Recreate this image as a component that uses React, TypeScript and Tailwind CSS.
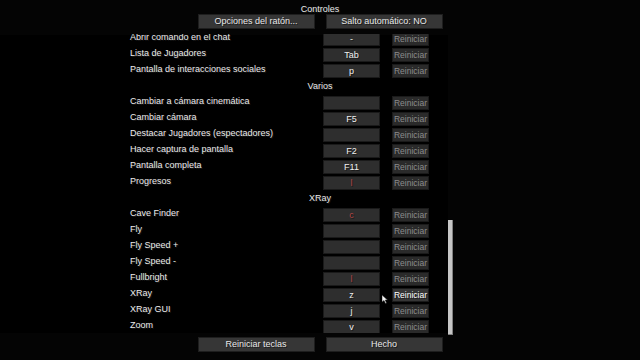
import React from "react";

type Row =
  | { kind: "cat"; label: string }
  | { kind: "key"; label: string; key: string; red?: boolean; hover?: boolean };

const rows: Row[] = [
  { kind: "key", label: "Abrir comando en el chat", key: "-" },
  { kind: "key", label: "Lista de Jugadores", key: "Tab" },
  { kind: "key", label: "Pantalla de interacciones sociales", key: "p" },
  { kind: "cat", label: "Varios" },
  { kind: "key", label: "Cambiar a cámara cinemática", key: "" },
  { kind: "key", label: "Cambiar cámara", key: "F5" },
  { kind: "key", label: "Destacar Jugadores (espectadores)", key: "" },
  { kind: "key", label: "Hacer captura de pantalla", key: "F2" },
  { kind: "key", label: "Pantalla completa", key: "F11" },
  { kind: "key", label: "Progresos", key: "l", red: true },
  { kind: "cat", label: "XRay" },
  { kind: "key", label: "Cave Finder", key: "c", red: true },
  { kind: "key", label: "Fly", key: "" },
  { kind: "key", label: "Fly Speed +", key: "" },
  { kind: "key", label: "Fly Speed -", key: "" },
  { kind: "key", label: "Fullbright", key: "l", red: true },
  { kind: "key", label: "XRay", key: "z", hover: true },
  { kind: "key", label: "XRay GUI", key: "j" },
  { kind: "key", label: "Zoom", key: "v" },
];

function BigButton({ label }: { label: string }) {
  return (
    <div className="w-[117px] h-[15px] bg-[#363636] border border-[#1e1e1e] flex items-center justify-center text-[#e8e8e8] text-[9px] leading-none [text-shadow:1px_1px_0_#1a1a1a]">
      {label}
    </div>
  );
}

export default function App() {
  return (
    <div
      className="w-[640px] h-[360px] bg-[#040404] flex flex-col overflow-hidden relative"
      style={{ fontFamily: '"Liberation Sans", Arial, sans-serif' }}
    >
      <div className="h-[14px] text-center text-[9px] leading-[19px] text-[#e8e8e8] [text-shadow:1px_1px_0_#1a1a1a]">
        Controles
      </div>
      <div className="h-[15px] flex justify-center gap-[11px]">
        <BigButton label="Opciones del ratón..." />
        <BigButton label="Salto automático: NO" />
      </div>
      <div className="h-[5px]" />
      <div className="h-[301px] flex">
        <div className="w-[448px] h-[299px] overflow-hidden bg-black flex flex-col">
          <div className="h-[1px] shrink-0 bg-[#040404]" />
          <div className="-mt-[4px] flex flex-col">
            {rows.map((r, i) =>
              r.kind === "cat" ? (
                <div
                  key={i}
                  className="h-[16px] pl-[192px] pb-[1px] flex items-center justify-center text-[9px] leading-none text-[#e8e8e8] [text-shadow:1px_1px_0_#1a1a1a]"
                >
                  {r.label}
                </div>
              ) : (
                <div key={i} className="h-[16px] pl-[130px] pr-[19px] flex items-start">
                  <div className="flex-1 h-[14px] pb-[2px] flex items-center text-[9px] leading-none text-[#ececec] [text-shadow:1px_1px_0_#1a1a1a]">
                    {r.label}
                  </div>
                  <div
                    className={
                      "w-[57px] h-[14px] mt-[1px] bg-[#2e2e2e] border border-[#1a1a1a] flex items-center justify-center text-[9px] leading-none [text-shadow:1px_1px_0_#1a1a1a] " +
                      (r.red ? "text-[#b04545]" : "text-[#f0f0f0]")
                    }
                  >
                    {r.key}
                  </div>
                  <div
                    className={
                      "ml-[12px] w-[37px] h-[14px] mt-[1px] border border-[#1a1a1a] flex items-center justify-center text-[8.5px] leading-none " +
                      (r.hover
                        ? "bg-[#363636] text-white [text-shadow:1px_1px_0_#1a1a1a]"
                        : "bg-[#2a2a2a] text-[#8c8c8c]")
                    }
                  >
                    Reiniciar
                  </div>
                </div>
              )
            )}
          </div>
        </div>
        <div className="w-[5px] flex flex-col">
          <div className="h-[186px]" />
          <div className="h-[115px] bg-[#c6c6c6] border-r border-b border-[#808080]" />
        </div>
      </div>
      <div className="h-[2px]" />
      <div className="h-[15px] flex justify-center gap-[11px]">
        <BigButton label="Reiniciar teclas" />
        <BigButton label="Hecho" />
      </div>
      <svg
        className="absolute left-[382px] top-[295px]"
        width="6"
        height="9"
        viewBox="0 0 6 9"
      >
        <path d="M0 0 L0 7 L2 5.5 L3.5 8.5 L4.5 8 L3.2 5 L5.5 5 Z" fill="#f2f2f2" stroke="#222" strokeWidth="0.5" />
      </svg>
    </div>
  );
}
